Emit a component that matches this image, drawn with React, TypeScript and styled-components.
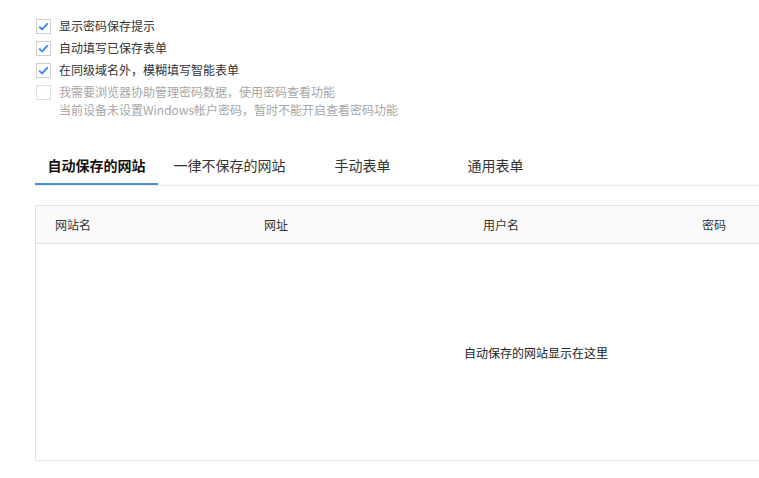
import styled, { createGlobalStyle } from "styled-components";

const GlobalStyle = createGlobalStyle`
  html, body {
    margin: 0;
    padding: 0;
    background: #ffffff;
    overflow: hidden;
  }
  body {
    font-family: "Microsoft YaHei", "Noto Sans CJK SC", sans-serif;
    color: #333333;
  }
`;

const options = [
  { label: "显示密码保存提示", checked: true },
  { label: "自动填写已保存表单", checked: true },
  { label: "在同级域名外，模糊填写智能表单", checked: true },
  {
    label: "我需要浏览器协助管理密码数据，使用密码查看功能",
    checked: false,
    disabled: true,
  },
];

const tabs = ["自动保存的网站", "一律不保存的网站", "手动表单", "通用表单"];
const columns = ["网站名", "网址", "用户名", "密码"];

const CheckIcon = () => (
  <svg width="11" height="9" viewBox="0 0 11 9">
    <path
      d="M1.2 4.6 L4.1 7.4 L9.8 1.4"
      fill="none"
      stroke="#3d8de5"
      strokeWidth="2"
    />
  </svg>
);

const App = () => {
  return (
    <>
      <GlobalStyle />
      <Page>
        <OptionList>
          {options.map((opt) => (
            <OptionRow key={opt.label} disabled={opt.disabled}>
              <CheckBox disabled={opt.disabled}>
                {opt.checked && <CheckIcon />}
              </CheckBox>
              <span>{opt.label}</span>
            </OptionRow>
          ))}
          <Note>当前设备未设置Windows帐户密码，暂时不能开启查看密码功能</Note>
        </OptionList>

        <TabBar>
          {tabs.map((tab, i) => (
            <Tab key={tab} active={i === 0}>
              {tab}
            </Tab>
          ))}
        </TabBar>

        <Table>
          <HeaderRow>
            {columns.map((col) => (
              <HeaderCell key={col}>{col}</HeaderCell>
            ))}
          </HeaderRow>
          <EmptyBody>自动保存的网站显示在这里</EmptyBody>
        </Table>
      </Page>
    </>
  );
};

export default App;

const Page = styled.div`
  width: 759px;
  height: 478px;
  box-sizing: border-box;
  padding: 15px 0 0 35px;
  overflow: hidden;
`;

const OptionList = styled.div`
  display: flex;
  flex-direction: column;
  padding-left: 1px;
`;

const OptionRow = styled.div<{ disabled?: boolean }>`
  display: flex;
  align-items: center;
  gap: 8px;
  height: 22px;
  font-size: 12px;
  line-height: 22px;
  color: ${(p) => (p.disabled ? "#a6a6a6" : "#333333")};
`;

const CheckBox = styled.span<{ disabled?: boolean }>`
  display: flex;
  align-items: center;
  justify-content: center;
  width: 15px;
  height: 15px;
  box-sizing: border-box;
  border: 1px solid ${(p) => (p.disabled ? "#e0e0e0" : "#cfcfcf")};
  background: #ffffff;
  flex-shrink: 0;
`;

const Note = styled.div`
  padding-left: 23px;
  margin-top: -3px;
  font-size: 12px;
  line-height: 19px;
  color: #a6a6a6;
`;

const TabBar = styled.div`
  display: flex;
  gap: 10px;
  margin-top: 26px;
  border-bottom: 1px solid #ececec;
`;

const Tab = styled.div<{ active?: boolean }>`
  width: 123px;
  height: 40px;
  box-sizing: border-box;
  display: flex;
  align-items: center;
  justify-content: center;
  font-size: 14px;
  font-weight: ${(p) => (p.active ? 700 : 400)};
  color: ${(p) => (p.active ? "#111111" : "#333333")};
  border-bottom: 2px solid ${(p) => (p.active ? "#4a8fdc" : "transparent")};
  padding-top: 2px;
`;

const Table = styled.div`
  width: 1000px;
  margin-top: 19px;
  border: 1px solid #e3e3e3;
`;

const HeaderRow = styled.div`
  display: grid;
  grid-template-columns: 209px 219px 219px 1fr;
  height: 37px;
  background: #fafafa;
  border-bottom: 1px solid #e3e3e3;
`;

const HeaderCell = styled.div`
  display: flex;
  align-items: center;
  padding-left: 19px;
  font-size: 12px;
  color: #333333;
`;

const EmptyBody = styled.div`
  display: flex;
  align-items: center;
  justify-content: center;
  height: 216px;
  font-size: 12px;
  color: #222222;
`;
